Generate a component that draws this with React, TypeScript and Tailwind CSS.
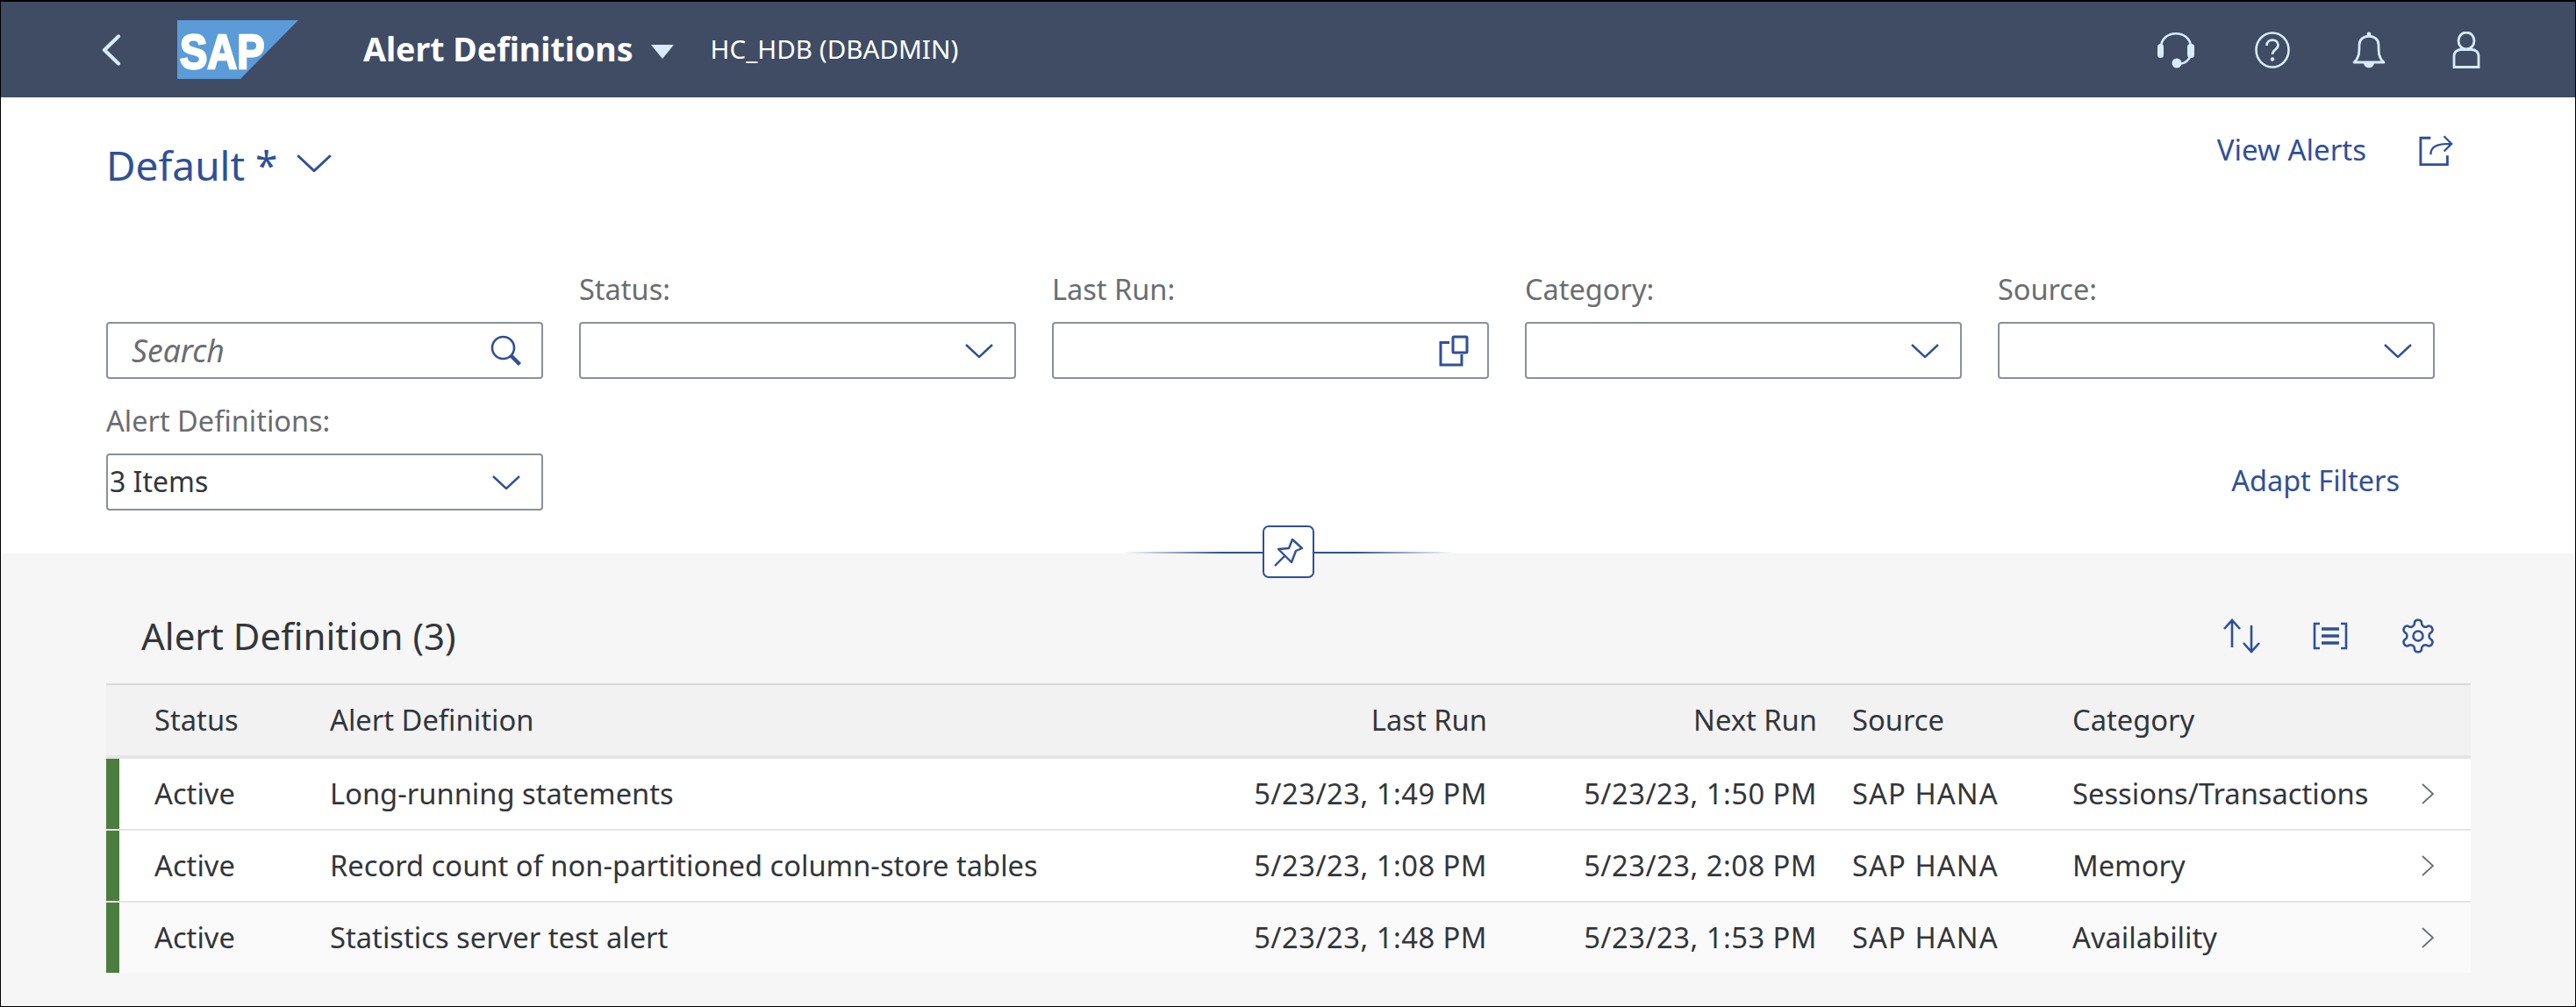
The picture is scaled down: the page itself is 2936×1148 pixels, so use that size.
const font = "font-['Noto_Sans','Open_Sans',sans-serif]";

const rows = [
  { name: "Long-running statements", last: "5/23/23, 1:49 PM", next: "5/23/23, 1:50 PM", category: "Sessions/Transactions", bg: "bg-white" },
  { name: "Record count of non-partitioned column-store tables", last: "5/23/23, 1:08 PM", next: "5/23/23, 2:08 PM", category: "Memory", bg: "bg-white" },
  { name: "Statistics server test alert", last: "5/23/23, 1:48 PM", next: "5/23/23, 1:53 PM", category: "Availability", bg: "bg-[#fafafa]" },
];

const cols = "grid grid-cols-[55px_200px_959px_360px_376px_40px_251px_398px_56px] items-center";

function Chevron({ className }: { className?: string }) {
  return (
    <svg width="32" height="16" viewBox="0 0 32 16" fill="none" className={className}>
      <path d="M1 1 L16 15 L31 1" stroke="#2f5098" strokeWidth="2.4" />
    </svg>
  );
}

function SearchIcon() {
  return (
    <svg width="36" height="36" viewBox="0 0 36 36" fill="none">
      <circle cx="14.5" cy="14.5" r="12.5" stroke="#2f5098" strokeWidth="2.6" />
      <path d="M23.5 23.5 L33.5 33.5" stroke="#2f5098" strokeWidth="4.5" />
    </svg>
  );
}

function CopyIcon() {
  return (
    <svg width="34" height="36" viewBox="0 0 34 36" fill="none">
      <rect x="16" y="2" width="16" height="18" rx="1" stroke="#2f5098" strokeWidth="3" />
      <path d="M12 8.5 H2 V34 H26 V22" stroke="#2f5098" strokeWidth="3" />
    </svg>
  );
}

function Field({ label, children }: { label: string; children?: React.ReactNode }) {
  return (
    <div className="flex flex-col">
      <div className="h-[40px] mb-[17px] text-[32.5px] leading-[40px] text-[#6a6d70]">{label}</div>
      <div className="h-[65px] border-2 border-[#89919a] rounded-[4px] bg-white flex items-center justify-between pl-[2px] pr-[24px] text-[#32363a] text-[32px]">
        {children ?? (
          <>
            <span />
            <Chevron />
          </>
        )}
      </div>
    </div>
  );
}

export default function App() {
  return (
    <div className={`w-[2936px] h-[1148px] border border-black border-t-2 bg-[#f6f6f7] flex flex-col overflow-hidden ${font}`}>
      <header className="h-[109px] shrink-0 bg-[#3f4c63] flex items-center text-white">
        <svg width="22" height="36" viewBox="0 0 22 36" fill="none" className="ml-[115px]">
          <path d="M19 2.5 L3 18 L19 33.5" stroke="#d9eaff" strokeWidth="4.2" strokeLinecap="round" strokeLinejoin="round" />
        </svg>
        <svg width="138" height="67" viewBox="0 0 138 67" className="ml-[64px]">
          <polygon points="0,0 138,0 72,67 0,67" fill="#5b9bd8" />
          <text
            transform="translate(3 55) scale(0.84 1)"
            fontFamily="'Liberation Sans', sans-serif"
            fontWeight="700"
            fontSize="56"
            fill="#ffffff"
            stroke="#ffffff"
            strokeWidth="2.5"
          >
            SAP
          </text>
        </svg>
        <div className="ml-[74px] text-[37.5px] font-bold">Alert Definitions</div>
        <svg width="26" height="16" viewBox="0 0 24 16" preserveAspectRatio="none" className="ml-[20px] mt-[4px]">
          <polygon points="0,0 24,0 12,16" fill="#d9eaff" />
        </svg>
        <div className="ml-[42px] text-[29.6px]">HC_HDB (DBADMIN)</div>
        <div className="ml-auto mr-[108px] flex items-center">
          <svg width="44" height="42" viewBox="0 0 44 42" fill="none">
            <path d="M5 18 C5 -3 39 -3 39 18 V24 C39 32 32 37 24 37" stroke="#d9eaff" strokeWidth="2.6" />
            <rect x="1" y="14" width="7" height="16" rx="3.5" fill="#d9eaff" />
            <rect x="35" y="14" width="8" height="16" rx="3.5" fill="#d9eaff" />
            <circle cx="23" cy="36" r="5.5" fill="#d9eaff" />
          </svg>
          <svg width="40" height="42" viewBox="0 0 40 42" fill="none" className="ml-[68px]">
            <ellipse cx="20" cy="21" rx="18.5" ry="19.5" stroke="#d9eaff" strokeWidth="2.6" />
            <path d="M13.5 16 C13.5 7.5 26.5 7.5 26.5 15.5 C26.5 20.5 20 20.5 20 26" stroke="#d9eaff" strokeWidth="2.8" />
            <circle cx="20" cy="31.5" r="2.2" fill="#d9eaff" />
          </svg>
          <svg width="38" height="42" viewBox="0 0 38 42" fill="none" className="ml-[71px]">
            <path d="M2 35 C8 30 8 24 8 15 C8 2 30 2 30 15 C30 24 30 30 36 35 Z" stroke="#d9eaff" strokeWidth="2.8" strokeLinejoin="round" />
            <circle cx="19" cy="3" r="2.4" fill="#d9eaff" />
            <path d="M13 36 H25 C24 43 14 43 13 36 Z" fill="#d9eaff" />
          </svg>
          <svg width="32" height="42" viewBox="0 0 32 42" fill="none" className="ml-[76px]">
            <ellipse cx="16" cy="10.5" rx="9" ry="9.5" stroke="#d9eaff" strokeWidth="2.8" />
            <path d="M2 40.5 V28 C2 23 6 20.5 10 20.5 H22 C26 20.5 30 23 30 28 V40.5 Z" stroke="#d9eaff" strokeWidth="2.8" />
          </svg>
        </div>
      </header>

      <section className="h-[520px] shrink-0 bg-white pl-[120px] pr-[160px] relative">
        <div className="h-[199px] flex items-start justify-between">
          <div className="mt-[46px] flex items-center text-[#2f5098] text-[46px] leading-[62px]">
            <span>Default *</span>
            <Chevron className="ml-[22px] mt-[-4px] w-[40px] h-[20px]" />
          </div>
          <div className="mt-[38px] flex items-center text-[#2f5098] text-[33px] leading-[44px]">
            <span>View Alerts</span>
            <svg width="40" height="37" viewBox="0 0 42 38" fill="none" className="ml-[60px] mr-[-22px]">
              <path d="M14 4 H2 V36 H34 V25" stroke="#2f5098" strokeWidth="3" />
              <path d="M14 24 C14 14 22 11 38 11 M30 2 L39 11 L30 20" stroke="#2f5098" strokeWidth="2.4" />
            </svg>
          </div>
        </div>
        <div className="grid grid-cols-[repeat(5,498px)] gap-x-[41px] gap-y-[28px]">
          <div className="flex flex-col justify-end">
            <div className="h-[65px] border-2 border-[#89919a] rounded-[4px] flex items-center justify-between pl-[27px] pr-[22px]">
              <span className="text-[35.5px] italic text-[#6a6d70]">Search</span>
              <SearchIcon />
            </div>
          </div>
          <Field label="Status:" />
          <Field label="Last Run:">
            <span />
            <div className="mr-[-3px]"><CopyIcon /></div>
          </Field>
          <Field label="Category:" />
          <Field label="Source:" />
          <Field label="Alert Definitions:">
            <span className="mt-[-2px]">3 Items</span>
            <Chevron />
          </Field>
          <div className="col-start-5 self-end h-[63px] mb-[2px] flex items-center justify-end pr-[40px] text-[#2f5098] text-[32.5px]">
            Adapt Filters
          </div>
        </div>
        <div className="absolute left-[1279px] top-[518px] w-[378px] h-[2px] bg-[linear-gradient(90deg,transparent,#2f5098_30%,#2f5098_70%,transparent)]" />
        <div className="absolute left-[1438px] top-[488px] w-[59px] h-[60px] bg-white border-2 border-[#2f5098] rounded-[7px] flex items-center justify-center">
          <svg width="34" height="34" viewBox="12 10 34 34" fill="none">
            <path d="M13 43 L24 32" stroke="#2f5098" strokeWidth="2.4" />
            <path d="M33 13 L44 23 L37 26 L32 39 L17 24 L29 23 Z" stroke="#2f5098" strokeWidth="2.4" strokeLinejoin="round" />
          </svg>
        </div>
      </section>

      <section className="flex-1 pl-[120px]">
        <div className="h-[148px] w-[2655px] flex items-center justify-between pl-[40px] pt-[38px]">
          <div className="text-[42px] text-[#32363a]">Alert Definition (3)</div>
          <div className="flex items-center mt-[2px]">
            <svg width="42" height="40" viewBox="0 0 42 40" fill="none">
              <path d="M1 12 L10 2 L19 12 M10 2 V33" stroke="#2f5098" strokeWidth="2.6" />
              <path d="M23 28 L32 38 L41 28 M32 38 V8" stroke="#2f5098" strokeWidth="2.6" />
            </svg>
            <svg width="40" height="32" viewBox="0 0 40 32" fill="none" className="ml-[60px]">
              <path d="M8 2 H2 V30 H8 M32 2 H38 V30 H32" stroke="#2f5098" strokeWidth="2.6" />
              <path d="M10 8 H30 M10 16 H30 M10 24 H30" stroke="#2f5098" strokeWidth="3.4" />
            </svg>
            <svg width="44" height="44" viewBox="0 0 24 24" fill="none" className="ml-[58px] mr-[-2px]">
              <path
                d="M12.22 2h-.44a2 2 0 0 0-2 2v.18a2 2 0 0 1-1 1.73l-.43.25a2 2 0 0 1-2 0l-.15-.08a2 2 0 0 0-2.73.73l-.22.38a2 2 0 0 0 .73 2.73l.15.1a2 2 0 0 1 1 1.72v.51a2 2 0 0 1-1 1.74l-.15.09a2 2 0 0 0-.73 2.73l.22.38a2 2 0 0 0 2.73.73l.15-.08a2 2 0 0 1 2 0l.43.25a2 2 0 0 1 1 1.73V20a2 2 0 0 0 2 2h.44a2 2 0 0 0 2-2v-.18a2 2 0 0 1 1-1.73l.43-.25a2 2 0 0 1 2 0l.15.08a2 2 0 0 0 2.73-.73l.22-.39a2 2 0 0 0-.73-2.73l-.15-.08a2 2 0 0 1-1-1.74v-.5a2 2 0 0 1 1-1.74l.15-.09a2 2 0 0 0 .73-2.73l-.22-.38a2 2 0 0 0-2.73-.73l-.15.08a2 2 0 0 1-2 0l-.43-.25a2 2 0 0 1-1-1.73V4a2 2 0 0 0-2-2z"
                stroke="#2f5098"
                strokeWidth="1.4"
              />
              <circle cx="12" cy="12" r="3" stroke="#2f5098" strokeWidth="1.4" />
            </svg>
          </div>
        </div>
        <div className="w-[2695px] text-[32.7px] text-[#32363a]">
          <div className={`${cols} h-[86px] border-t-2 border-t-[#d9d9d9] border-b-4 border-b-[#e5e5e5] bg-[#f2f2f2]`}>
            <div />
            <div>Status</div>
            <div>Alert Definition</div>
            <div className="text-right">Last Run</div>
            <div className="text-right">Next Run</div>
            <div />
            <div>Source</div>
            <div>Category</div>
            <div />
          </div>
          {rows.map((row, i) => (
            <div key={row.name} className={`${cols} ${i < 2 ? "h-[82px] border-b-2 border-b-[#e5e5e5]" : "h-[80px]"} ${row.bg}`}>
              <div className="h-full">
                <div className="w-[15px] h-full bg-[#4b7d3f]" />
              </div>
              <div>Active</div>
              <div>{row.name}</div>
              <div className="text-right tracking-[0.5px]">{row.last}</div>
              <div className="text-right tracking-[0.5px]">{row.next}</div>
              <div />
              <div className="tracking-[1.1px]">SAP HANA</div>
              <div>{row.category}</div>
              <div className="flex">
                <svg width="14" height="24" viewBox="0 0 14 24" fill="none">
                  <path d="M1 1 L13 12 L1 23" stroke="#6a6d70" strokeWidth="1.8" />
                </svg>
              </div>
            </div>
          ))}
        </div>
      </section>
    </div>
  );
}
